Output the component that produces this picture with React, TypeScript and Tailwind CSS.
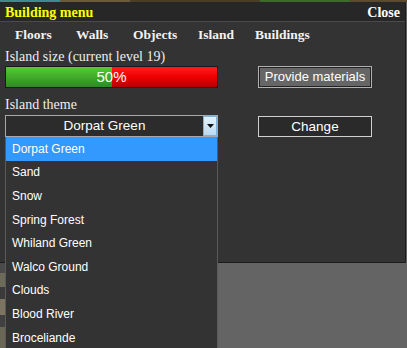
import { useState } from 'react'

const tabs = [
  { label: 'Floors', w: 'w-[61px]' },
  { label: 'Walls', w: 'w-[57px]' },
  { label: 'Objects', w: 'w-[65px]' },
  { label: 'Island', w: 'w-[57px]' },
  { label: 'Buildings', w: 'w-[70px]' },
]

const themes = [
  'Dorpat Green',
  'Sand',
  'Snow',
  'Spring Forest',
  'Whiland Green',
  'Walco Ground',
  'Clouds',
  'Blood River',
  'Broceliande',
]

const serif = "font-['Liberation_Serif',_'Times_New_Roman',_serif]"
const sans = "font-['Liberation_Sans',_Tahoma,_sans-serif]"

export default function App() {
  const [selected, setSelected] = useState('Dorpat Green')
  const progress = 50

  return (
    <div className="relative w-[407px] h-[348px] overflow-hidden bg-[#646464]">
      {/* game world peeking above the panel */}
      <div className="flex h-[2px]">
        <div className="w-[60px] bg-[#3f8a8f]" />
        <div className="w-[70px] bg-[#6b5a3c]" />
        <div className="w-[130px] bg-[#4a3e28]" />
        <div className="w-[90px] bg-[#3e6b2c]" />
        <div className="flex-1 bg-[#5a4a30]" />
      </div>

      {/* game world at the left edge below the panel */}
      <div className="absolute left-0 top-[263px] w-[5px] h-[85px] flex flex-col">
        <div className="h-[10px] bg-[#4a4a4a]" />
        <div className="h-[14px] bg-[#6e6a5a]" />
        <div className="h-[12px] bg-[#3a3a3a]" />
        <div className="h-[16px] bg-[#7a7460]" />
        <div className="h-[12px] bg-[#404040]" />
        <div className="flex-1 bg-[#6a6658]" />
      </div>

      <div className="w-[406px] h-[261px] bg-[#333333] border-r border-b border-[#1c1c1c] flex flex-col">
        {/* title bar */}
        <div className="h-[20px] bg-[#272727] border-b border-[#4a4a4a] flex items-center justify-between px-[5px] pt-[2px]">
          <span className={`${serif} font-bold text-[14px] text-[#ffff00] leading-none`}>Building menu</span>
          <span className={`${serif} font-bold text-[14px] text-white leading-none`}>Close</span>
        </div>

        {/* tabs */}
        <div className={`${serif} flex items-center h-[24px] pl-[15px] pt-[3px] text-[13.5px] font-bold text-[#f2f2f2]`}>
          {tabs.map((t) => (
            <span key={t.label} className={t.w}>
              {t.label}
            </span>
          ))}
        </div>

        <div className="px-[5px]">
          <div className={`${serif} h-[14px] text-[14px] text-[#eeeeee] leading-[14px] mt-[4px]`}>
            Island size (current level 19)
          </div>

          <div className="flex items-center mt-[2px]">
            <div className="relative w-[213px] h-[22px] flex border border-[#1a1a1a]">
              <div
                className="h-full bg-gradient-to-b from-[#55cc33] to-[#2e8a22]"
                style={{ width: `${progress}%` }}
              />
              <div className="flex-1 h-full bg-gradient-to-b from-[#ff1a1a] via-[#ee0000] to-[#b30000]" />
              <span className={`${sans} absolute inset-0 flex items-center justify-center text-[15px] text-white`}>
                {progress}%
              </span>
            </div>
            <button className={`${sans} ml-[40px] w-[114px] h-[22px] bg-[#666666] border border-[#b0b0b0] outline outline-1 outline-[#222] -outline-offset-2 text-[13px] text-white`}>
              Provide materials
            </button>
          </div>

          <div className={`${serif} h-[14px] text-[14px] text-[#eeeeee] leading-[14px] mt-[10px]`}>Island theme</div>

          <div className="flex items-center mt-[3px]">
            <div className="w-[213px] h-[22px] flex items-center border border-[#a8a8a8] bg-[#2c2c2c]">
              <span className={`${sans} flex-1 text-center text-[13.5px] text-white`}>{selected}</span>
              <div className="w-[14px] h-[20px] bg-gradient-to-b from-[#e4f2fc] to-[#b8daf2] border border-[#7fb2d6] flex items-center justify-center">
                <svg width="7" height="4" viewBox="0 0 7 4">
                  <path d="M0 0h7L3.5 4z" fill="#111" />
                </svg>
              </div>
            </div>
            <button className={`${sans} ml-[40px] w-[114px] h-[21px] bg-[#2a2a2a] border border-[#d0d0d0] text-[13.5px] text-white`}>
              Change
            </button>
          </div>
        </div>
      </div>

      {/* open dropdown list */}
      <ul className="absolute left-[5px] top-[137px] w-[213px] h-[215px] bg-[#333333] border border-[#5a5a5a] border-t-0">
        {themes.map((t) => (
          <li
            key={t}
            onClick={() => setSelected(t)}
            className={`${sans} h-[23.6px] flex items-center pl-[6px] text-[12px] text-white ${
              t === selected ? 'bg-[#3399ff]' : ''
            }`}
          >
            {t}
          </li>
        ))}
      </ul>
    </div>
  )
}
